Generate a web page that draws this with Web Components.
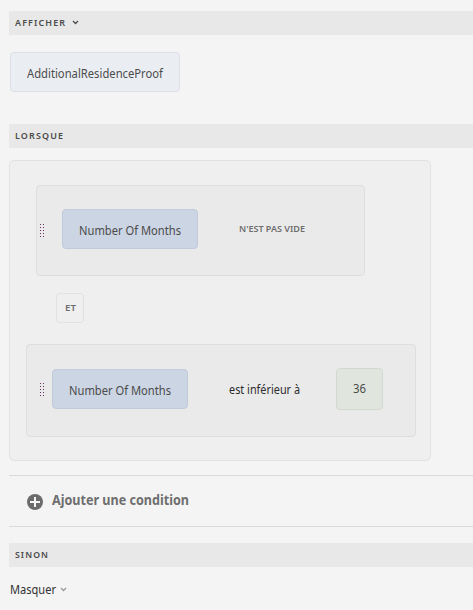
<!DOCTYPE html>
<html lang="fr">
<head>
<meta charset="utf-8">
<title>Règle</title>
<style>
body{margin:0;background:#f4f4f4;font-family:"Noto Sans","Open Sans",sans-serif;width:473px;height:610px;overflow:hidden}
</style>
</head>
<body>
<rule-editor></rule-editor>
<script>
const define=(name,html,after)=>customElements.define(name,class extends HTMLElement{
  connectedCallback(){
    if(this.shadowRoot)return;
    this.attachShadow({mode:'open'}).innerHTML=html;
    if(after)after(this);
  }
});

/* A line of text condensed to the width given in its w attribute. */
define('fit-text',`<style>:host{display:block;white-space:nowrap;line-height:16px;flex:none}span{display:inline-block;transform-origin:0 50%}</style><span><slot></slot></span>`,el=>{
  const span=el.shadowRoot.querySelector('span');
  const w=+el.getAttribute('w'), track=+(el.getAttribute('track')||0);
  el.style.width=w+'px';
  span.style.letterSpacing=track+'px';
  requestAnimationFrame(()=>{
    span.style.transform='scaleX('+(w/(span.getBoundingClientRect().width-track)).toFixed(4)+')';
  });
});

define('chevron-icon',`<style>:host{display:block;width:7px;height:5px;flex:none}svg{display:block}</style>
<svg width="7" height="5" viewBox="0 0 7 5"><path d="M1 1l2.5 2.5L6 1" fill="none" stroke="currentColor" stroke-width="1.3"/></svg>`);

define('section-bar',`<style>:host{display:flex;box-sizing:border-box;height:24px;margin-left:9px;padding:0 0 1px 6px;align-items:center;gap:7px;background:#e8e8e8;color:#4b4b4b;font-size:9.5px;font-weight:600}</style><slot></slot>`);

define('value-chip',`<style>:host{display:flex;box-sizing:border-box;width:136px;height:40px;flex:none;align-items:center;justify-content:center;padding-top:4px;border:1px solid #bfcbdb;border-radius:4px;background:#cbd5e4;color:#4b4b4b;font-size:12.5px}
:host([kind=target]){width:170px;background:#eaeef3;border-color:#dbdfe6}
:host([kind=number]){width:47px;height:42px;padding-top:0;background:#e0e6dd;border-color:#d3d9d0}</style><slot></slot>`);

define('drag-handle',`<style>:host{display:grid;grid-template-columns:1px 1px;grid-auto-rows:1px;gap:2px;flex:none}i{background:#6d2f62}</style>${'<i></i>'.repeat(10)}`);

define('condition-row',`<style>:host{display:flex;box-sizing:border-box;align-items:center;border:1px solid #dedede;border-radius:4px;background:#eaeaea}</style><slot></slot>`);

define('join-tag',`<style>:host{display:flex;box-sizing:border-box;width:28px;height:30px;align-items:center;justify-content:center;border:1px solid #e1e1e1;border-radius:4px;font-size:9.5px;font-weight:600;color:#6e6e6e}</style><slot></slot>`);

define('condition-group',`<style>:host{display:block;box-sizing:border-box;width:422px;height:301px;margin:12px 0 0 9px;border:1px solid #e2e2e2;border-radius:5px;background:#efefef;padding:24px 0 0 16px}</style><slot></slot>`);

define('add-condition',`<style>:host{display:flex;box-sizing:border-box;height:52px;margin:14px 0 16px 9px;padding:0 0 0 18px;gap:9px;align-items:center;border:solid #dadada;border-width:1px 0;color:#6e6e6e;font-size:13.5px;font-weight:700}svg{display:block;margin-top:2px;flex:none}fit-text{margin-top:-2px}</style>
<svg width="16" height="16" viewBox="0 0 16 16"><circle cx="8" cy="8" r="8" fill="#6b6b6b"/><path d="M8 3v10M3 8h10" stroke="#f4f4f4" stroke-width="2"/></svg><fit-text w="137">Ajouter une condition</fit-text>`);

define('rule-editor',`<style>
:host{display:block;padding-top:11px}
.target{margin:17px 0 32px 10px}
.first{width:329px;height:91px;margin-left:10px;padding-left:3px}
.first value-chip{margin:-3px 41px 0 18px}
.first .op{font-size:9.5px;font-weight:600;color:#6e6e6e;margin-top:-4px}
join-tag{margin:17px 0 21px 30px}
.second{width:390px;height:93px;padding-left:13px}
.second drag-handle{margin-top:-2px}
.second value-chip:first-of-type{margin:-3px 41px 0 8px}
.second .op{font-size:12px;color:#2c2c2c;margin-top:-2px}
.second value-chip[kind=number]{margin:-3px 0 0 36px}
.else{display:flex;align-items:center;gap:4px;height:18px;margin:14px 0 0 10px;font-size:12.5px;color:#323232}
.else chevron-icon{color:#999;margin-top:-1px}
</style>
<section-bar><fit-text w="50" track="1.2">AFFICHER</fit-text><chevron-icon></chevron-icon></section-bar>
<value-chip class="target" kind="target"><fit-text w="136">AdditionalResidenceProof</fit-text></value-chip>
<section-bar><fit-text w="48" track="1.2">LORSQUE</fit-text></section-bar>
<condition-group>
<condition-row class="first"><drag-handle></drag-handle><value-chip><fit-text w="102">Number Of Months</fit-text></value-chip><fit-text class="op" w="66">N'EST PAS VIDE</fit-text></condition-row>
<join-tag><fit-text w="11">ET</fit-text></join-tag>
<condition-row class="second"><drag-handle></drag-handle><value-chip><fit-text w="102">Number Of Months</fit-text></value-chip><fit-text class="op" w="71">est inférieur à</fit-text><value-chip kind="number"><fit-text w="13">36</fit-text></value-chip></condition-row>
</condition-group>
<add-condition></add-condition>
<section-bar><fit-text w="33" track="1.2">SINON</fit-text></section-bar>
<div class="else"><fit-text w="46">Masquer</fit-text><chevron-icon></chevron-icon></div>`);
</script>
</body>
</html>
